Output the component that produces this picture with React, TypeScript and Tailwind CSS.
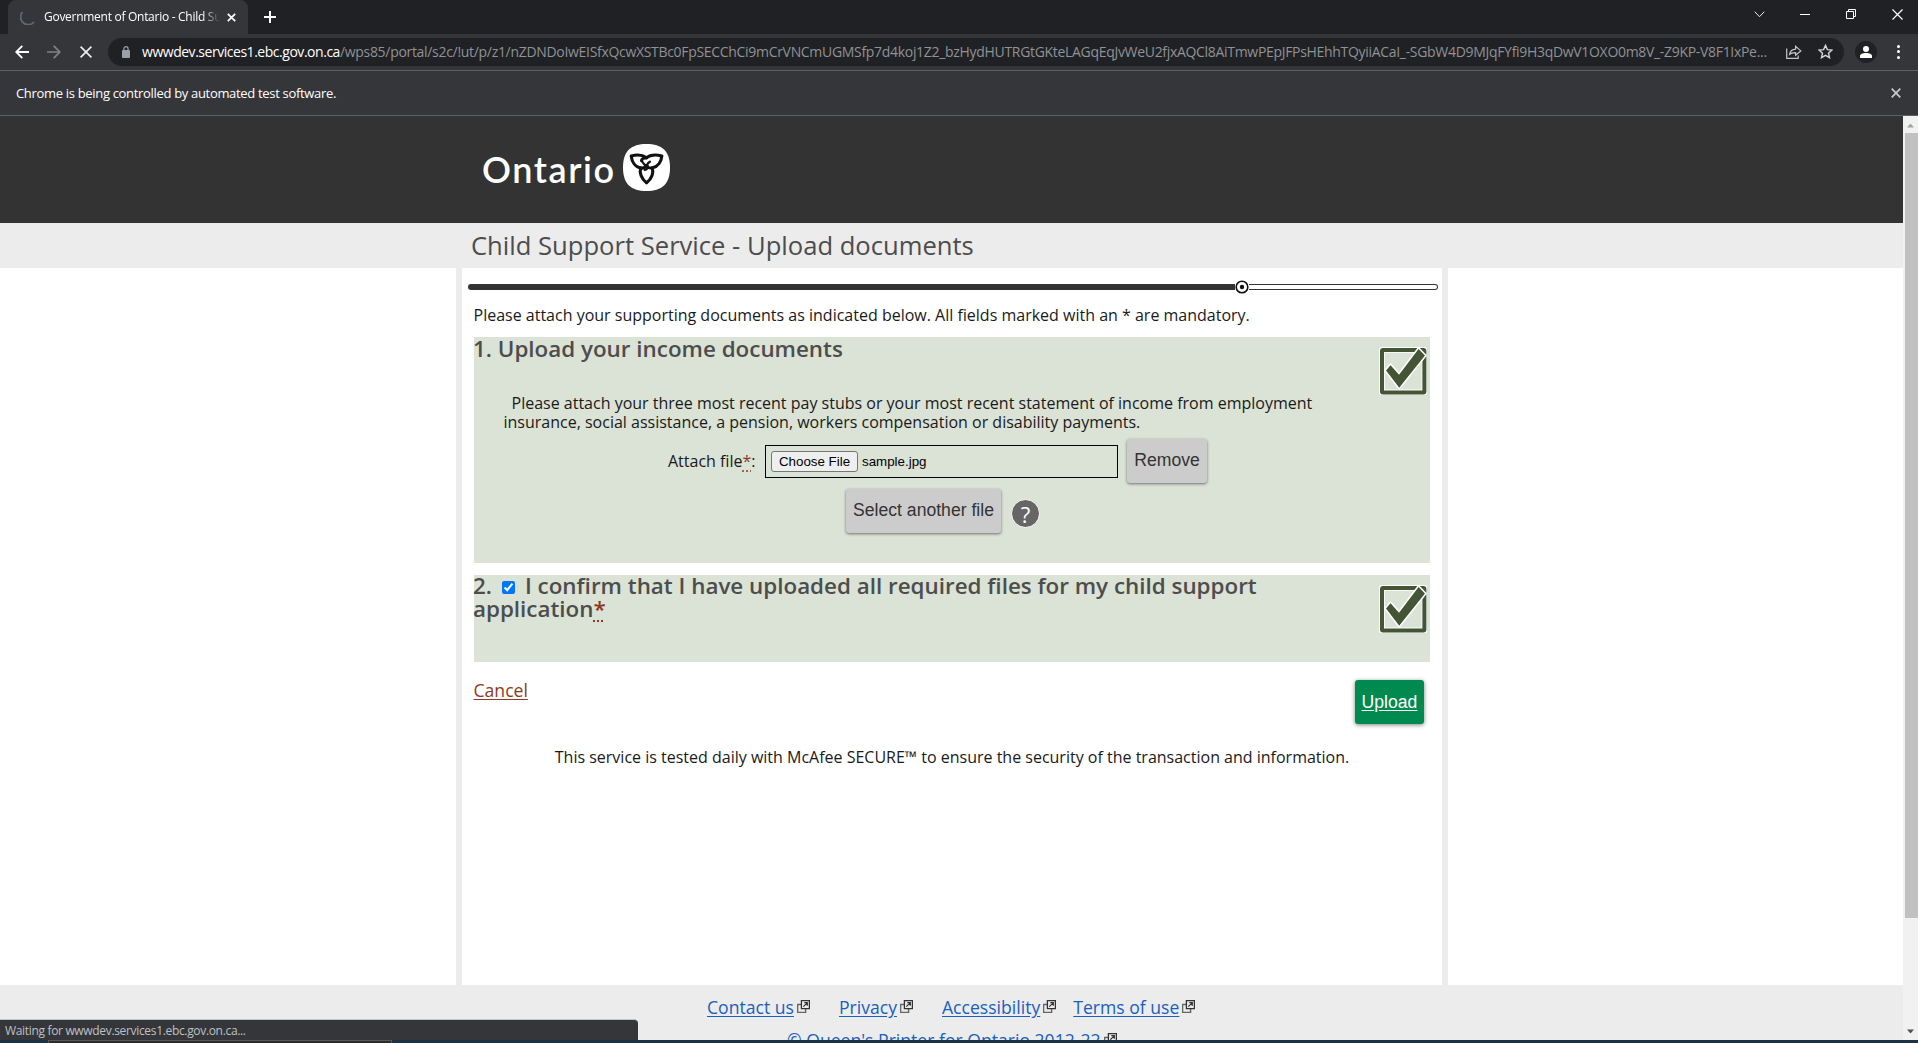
import type { ReactNode } from "react";

const PATH =
  "/wps85/portal/s2c/!ut/p/z1/nZDNDoIwEISfxQcwXSTBc0FpSECChCi9mCrVNCmUGMSfp7d4koj1Z2_bzHydHUTRGtGKteLAGqEqJvWeU2fjxAQCl8AiTmwPEpJFPsHEhhTQyiiACaI_-SGbW4D9MJqFYfi9H3qDwV1OXO0m8V_-Z9KP-V8F1IxPe...";

function TabStrip() {
  return (
    <div className="flex h-[34px] items-stretch bg-[#202124] text-white">
      <div className="ml-2 flex w-[240px] items-center rounded-t-lg bg-[#35363a] pl-3">
        <svg className="size-4" viewBox="0 0 16 16" fill="none">
          <path d="M2.500 3A7 7 0 0 0 14 13" stroke="#5f6676" strokeWidth="1.8" />
        </svg>
        <div className="ml-2 w-[178px] overflow-hidden text-[12px] leading-4 tracking-[-0.28px] whitespace-nowrap [mask-image:linear-gradient(to_right,black_158px,transparent_176px)]">
          Government of Ontario - Child Support
        </div>
        <svg className="ml-[5px] size-[9px]" viewBox="0 0 9 9" stroke="#fff" strokeWidth="1.7">
          <path d="M.8.8l7.4 7.4M8.2.8L.8 8.2" />
        </svg>
      </div>
      <svg className="mt-[11px] ml-[16px] size-3" viewBox="0 0 12 12" stroke="#fff" strokeWidth="2">
        <path d="M6 0v12M0 6h12" />
      </svg>
      <div className="ml-auto flex h-7 items-center pr-[15px]">
        <svg className="h-[7px] w-[11px]" viewBox="0 0 11 7" fill="none" stroke="#eee">
          <path d="M.7.7l4.8 5 4.8-5" />
        </svg>
        <div className="ml-[35px] h-px w-[10px] bg-white" />
        <svg className="ml-[36px] size-[10px]" viewBox="0 0 10 10" fill="none" stroke="#fff">
          <path d="M.5 2.5h7v7h-7zM2.5 2.5v-2h7v7h-2" />
        </svg>
        <svg className="ml-[36px] size-[11px]" viewBox="0 0 11 11" stroke="#fff" strokeWidth="1.2">
          <path d="M.5.5l10 10M10.5.5l-10 10" />
        </svg>
      </div>
    </div>
  );
}

function Toolbar() {
  return (
    <div className="flex h-[37px] items-center border-b border-[#5f6062] bg-[#35363a] pb-px">
      <svg className="ml-[15px] h-[14px] w-[14px]" viewBox="0 0 14 14" fill="none" stroke="#fff" strokeWidth="1.8">
        <path d="M14 7H1.5M7.3.9L1.2 7l6.1 6.1" />
      </svg>
      <svg className="ml-[18px] h-[14px] w-[14px]" viewBox="0 0 14 14" fill="none" stroke="#808184" strokeWidth="1.7">
        <path d="M0 7h12.5M6.7.9L12.8 7l-6.1 6.1" />
      </svg>
      <svg className="ml-[19px] h-[12px] w-[12px]" viewBox="0 0 12 12" stroke="#f1f1f1" strokeWidth="1.6">
        <path d="M.6.6l10.8 10.8M11.4.6L.6 11.4" />
      </svg>
      <div className="ml-4 flex h-7 w-[1736px] items-center rounded-full bg-[#202124] pl-[14px]">
        <svg className="h-[12px] w-[8px]" viewBox="0 0 8 12" fill="none">
          <rect y="4" width="8" height="8" rx="1" fill="#9aa0a6" />
          <path d="M1.9 4.5V2.8a2.1 2.1 0 0 1 4.2 0v1.7" stroke="#9aa0a6" strokeWidth="1.2" />
        </svg>
        <div className="ml-[12px] w-[1626px] text-[14px] leading-5 whitespace-nowrap text-[#9aa0a6]">
          <span className="tracking-[-0.47px] text-white">wwwdev.services1.ebc.gov.on.ca</span>
          <span className="tracking-[-0.31px] text-[#8f9296]">{PATH}</span>
        </div>
        <svg className="ml-[18px] h-[14px] w-[16px]" viewBox="0 0 16 14" fill="none" stroke="#c4c7ca" strokeWidth="1.2">
          <path d="M.7 3.5v9.8h11.5V10.5" />
          <path d="M3.6 9.3c.6-3.3 2.6-4.9 6-5.1V1.3l5.2 4.6-5.2 4.4V7.6C7 7.5 5.1 8 3.6 9.3z" />
        </svg>
        <svg className="ml-[16px] size-[15px]" viewBox="0 0 15 15" fill="none" stroke="#d3d5d8" strokeWidth="1.4">
          <path d="M7.5 1.4l1.9 4.2 4.5.5-3.4 3.1 1 4.5-4-2.3-4 2.3 1-4.5L1.1 6.100l4.500-.5z" />
        </svg>
      </div>
      <div className="ml-[11px] flex size-[22px] items-center justify-center rounded-full bg-[#202124]">
        <svg className="size-3" viewBox="0 0 12 12" fill="#fff">
          <circle cx="6" cy="3" r="3" />
          <path d="M0 12V10c0-2 2.600-3 6-3s6 1 6 3v2z" />
        </svg>
      </div>
      <div className="ml-[20px] flex flex-col gap-[2.5px]">
        <div className="size-[3px] rounded-full bg-white" />
        <div className="size-[3px] rounded-full bg-white" />
        <div className="size-[3px] rounded-full bg-white" />
      </div>
    </div>
  );
}

function InfoBar() {
  return (
    <div className="flex h-[45px] items-center justify-between border-b border-[#5f6062] bg-[#35363a] pr-[17px] pl-4 text-white">
      <span className="text-[13px] leading-5 tracking-[-0.32px]">
        Chrome is being controlled by automated test software.
      </span>
      <svg className="size-[10px]" viewBox="0 0 10 10" stroke="#c8cacc" strokeWidth="1.7">
        <path d="M.7.7l8.6 8.6M9.3.7L.7 9.3" />
      </svg>
    </div>
  );
}

function Trillium() {
  return (
    <svg className="h-[47px] w-[47px]" viewBox="0 0 47 47" fill="none">
      <path d="M23.5 0C39 0 47 7 47 23.5S39 47 23.5 47 0 40 0 23.5 8 0 23.5 0z" fill="#fff" />
      <g
        stroke="#111"
        strokeWidth="2.9"
        strokeLinejoin="round"
        strokeLinecap="round"
        transform="translate(-1.6 -1.4) scale(1.07 1.04)"
      >
        <path d="M23.5 14.6C19.5 11.6 14.2 11.4 9.2 12.9c.5 5.4 3.6 10.4 8.6 11.5 2.3.5 4.2-.4 5.2-2.200" />
        <path d="M18.8 17.3c.5-2 2.2-2.6 4-2.5 3.8-3 9.8-3.5 15-1.9-.6 5.4-3.8 10.2-8.5 11.3-2 .5-3.9.2-4.9-1.200" />
        <path d="M18 24.2c-1.3 5 .8 10.2 5.500 14.600 4.700-4.200 6.700-9.600 5.400-14.600" />
        <path
          d="M23.2 22.2c-2.2-.6-3-2.4-4.4-4.9M24.4 23c-.8-2.2.4-3.6 2.3-4.6M24.4 23c.2 1.8-.8 2.9-2.6 3.200"
          strokeWidth="2.1"
        />
      </g>
    </svg>
  );
}

function SiteHeader() {
  return (
    <>
      <div className="flex h-[107px] items-start bg-[#333333] pt-[28px] pl-[482px]">
        <span className="mt-[2px] w-[141px] font-[Lato,sans-serif] text-[36px] leading-[47px] font-semibold tracking-[1.6px] text-white">
          Ontario
        </span>
        <Trillium />
      </div>
      <h1 className="h-[45px] bg-[#ececec] pl-[471px] text-[25.6px] leading-[46px] text-[#4d4d4d]">
        Child Support Service - Upload documents
      </h1>
    </>
  );
}

function Progress() {
  return (
    <div className="mt-4 ml-1.5 flex w-[970px] items-center">
      <div className="h-1.5 w-[767px] rounded-l-sm bg-[#333]" />
      <svg className="-my-1 size-[14px] shrink-0" viewBox="0 0 14 14">
        <circle cx="7" cy="7" r="5.8" fill="#fff" stroke="#111" strokeWidth="1.6" />
        <circle cx="7" cy="7" r="2.2" fill="#111" />
      </svg>
      <div className="h-1.5 flex-1 rounded-r-sm border border-l-0 border-[#333] bg-white" />
    </div>
  );
}

function DoneMark() {
  return (
    <svg className="size-[48px]" viewBox="0 0 48 48" fill="none">
      <rect x="2.8" y="2.8" width="42.8" height="42.8" rx="1" stroke="#fff" strokeWidth="6" />
      <rect x="3" y="3" width="42.4" height="42.4" rx="1" stroke="#435534" strokeWidth="4" />
      <path
        d="M6 23.5l5.5-6.5 8.5 9.5L39.5 0.8 47 8.5 20.2 42z"
        fill="#435534"
        stroke="#fff"
        strokeWidth="1.6"
      />
    </svg>
  );
}

function GreyButton({ children, width }: { children: ReactNode; width: string }) {
  return (
    <button
      className={`${width} h-[44px] rounded-[3px] bg-[#cccccc] pb-[2px] text-center font-['Liberation_Sans',Arial,sans-serif] text-[17.6px] leading-5 whitespace-nowrap text-[#333] shadow-[0_1px_3px_rgba(0,0,0,0.5)]`}
    >
      {children}
    </button>
  );
}

function Mandatory() {
  return (
    <abbr className="text-[#8d3a1c] underline decoration-dotted underline-offset-[3px]" title="mandatory">
      *
    </abbr>
  );
}

function IncomeSection() {
  return (
    <section className="flex h-[226px] bg-[#dbe2d6]">
      <div className="w-[904px]">
        <h2 className="-ml-px text-[22.4px] leading-[23px] font-semibold text-[#4d4d4d]">
          1. Upload your income documents
        </h2>
        <p className="mt-[34px] pl-[29.5px] text-[16px] leading-[19.2px] text-[#1a1a1a]">
          <span className="ml-2 whitespace-nowrap">
            Please attach your three most recent pay stubs or your most recent statement of income from employment
          </span>
          <br />
          insurance, social assistance, a pension, workers compensation or disability payments.
        </p>
        <div className="mt-[7px] flex h-[44px] items-center pl-[194px]">
          <label className="w-[97px] text-[16px] text-[#1a1a1a]">
            Attach file
            <Mandatory />:
          </label>
          <div className="flex h-[33px] w-[353px] items-center border border-black pl-[5px] font-['Liberation_Sans',Arial,sans-serif] text-[13.333px] leading-4 text-black">
            <span className="h-[21px] w-[87px] rounded-[3px] border border-[#767676] bg-[#efefef] text-center leading-[20px]">
              Choose File
            </span>
            <span className="mt-px ml-[4px]">sample.jpg</span>
          </div>
          <div className="ml-[9px]">
            <GreyButton width="w-[80px]">Remove</GreyButton>
          </div>
        </div>
        <div className="mt-1.5 flex items-center pl-[372px]">
          <GreyButton width="w-[155px]">Select another file</GreyButton>
          <span className="mt-[5px] ml-[10px] flex size-[29px] items-center justify-center rounded-full border border-white bg-[#666] text-[22px] leading-none font-medium text-white">
            ?
          </span>
        </div>
      </div>
      <div className="mt-[10px] ml-[1px]">
        <DoneMark />
      </div>
    </section>
  );
}

function ConfirmSection() {
  return (
    <section className="mt-3 flex h-[87px] bg-[#dbe2d6]">
      <h2 className="-mt-px -ml-px w-[905px] text-[22.4px] leading-[23px] font-semibold text-[#4d4d4d]">
        <label>
          2.
          <input type="checkbox" defaultChecked className="mr-[10px] ml-[10px] size-[13px]" />
          I confirm that I have uploaded all required files for my child support
          <br />
          application
          <Mandatory />
        </label>
      </h2>
      <div className="mt-[10px] ml-[1px]">
        <DoneMark />
      </div>
    </section>
  );
}

function ExternalIcon() {
  return (
    <svg className="ml-[3px] inline size-[13px] align-[1px]" viewBox="0 0 13 13" fill="none" stroke="#333">
      <path d="M4 4.5H.6v7.9h8V9" stroke="#666" strokeWidth="1.4" />
      <path d="M4.4.6h8v8h-8z" strokeWidth="1.3" />
      <path d="M6.300 6.700l3.900-3.900M7.300 2.700h3v3" strokeWidth="1.200" />
    </svg>
  );
}

function FooterLink({ children, gap }: { children: ReactNode; gap: string }) {
  return (
    <span className={`${gap} whitespace-nowrap`}>
      <a className="text-[#1a5fbf] underline underline-offset-2">{children}</a>
      <ExternalIcon />
    </span>
  );
}

function ArrowUp() {
  return (
    <svg className="h-[5px] w-[7px]" viewBox="0 0 7 5" fill="#a3a3a3">
      <path d="M0 4.500L3.500.5 7 4.500z" />
    </svg>
  );
}

function ArrowDown() {
  return (
    <svg className="h-[5px] w-[7px]" viewBox="0 0 7 5" fill="#505050">
      <path d="M0 .500h7L3.500 4.500z" />
    </svg>
  );
}

export default function App() {
  return (
    <div className="relative flex h-[1043px] w-[1918px] flex-col overflow-hidden bg-white font-['Open_Sans','Noto_Sans',sans-serif]">
      <TabStrip />
      <Toolbar />
      <InfoBar />
      <div className="flex h-[924px] shrink-0">
        <div className="flex w-[1903px] flex-col overflow-hidden">
          <SiteHeader />
          <div className="flex h-[717px] shrink-0 justify-start">
            <div className="w-[456px]" />
            <main className="w-[992px] border-x-6 border-[#ececec]">
              <Progress />
              <div className="pr-3 pl-3">
                <p className="mt-[13px] -ml-[0.5px] h-[34px] text-[16px] leading-[24px] text-[#1a1a1a]">
                  Please attach your supporting documents as indicated below. All fields marked with an * are mandatory.
                </p>
                <IncomeSection />
                <ConfirmSection />
                <div className="mt-[18px] flex h-[44px] items-start justify-between pr-1.5">
                  <a className="-mt-px -ml-[0.5px] text-[17.6px] leading-[22px] text-[#8d3a1c] underline underline-offset-2">
                    Cancel
                  </a>
                  <button className="h-[44px] w-[69px] rounded-[3px] bg-[#008a50] font-['Liberation_Sans',Arial,sans-serif] text-[17.6px] text-white underline underline-offset-2 shadow-[0_1px_4px_rgba(0,0,0,0.5)]">
                    Upload
                  </button>
                </div>
                <p className="mt-[21px] text-center text-[16px] leading-6 text-[#1a1a1a]">
                  This service is tested daily with McAfee SECURE™ to ensure the security of the transaction and
                  information.
                </p>
              </div>
            </main>
          </div>
          <footer className="h-[55px] shrink-0 overflow-hidden bg-[#ececec] pt-[10px] text-[17.6px] leading-6">
            <div className="flex pl-[707px]">
              <FooterLink gap="mr-[29px]">Contact us</FooterLink>
              <FooterLink gap="mr-[29px]">Privacy</FooterLink>
              <FooterLink gap="mr-[17px]">Accessibility</FooterLink>
              <FooterLink gap="mr-0">Terms of use</FooterLink>
            </div>
            <div className="mt-[9px] pl-[787px]">
              <FooterLink gap="mr-0">© Queen's Printer for Ontario 2012-22</FooterLink>
            </div>
          </footer>
        </div>
        <div className="flex w-[15px] flex-col items-center bg-[#f1f1f1] pt-[7px] pb-[6px]">
          <ArrowUp />
          <div className="mt-[5px] h-[785px] w-[13px] translate-x-px bg-[#c1c1c1]" />
          <div className="mt-auto">
            <ArrowDown />
          </div>
        </div>
      </div>
      <div className="flex h-[3px] bg-[#1b3344] pl-12">
        <div className="w-[344px] border border-b-0 border-[#5c5a58] bg-[#2b2b2b]" />
      </div>
      <div className="absolute top-[1019px] left-0 h-[21px] w-[638px] rounded-tr-[4px] border-t border-[#c2c5cb] bg-[#35363a] pl-[5px] text-[12px] leading-[21px] tracking-[-0.33px] text-[#bdc1c6]">
        Waiting for wwwdev.services1.ebc.gov.on.ca...
      </div>
    </div>
  );
}
